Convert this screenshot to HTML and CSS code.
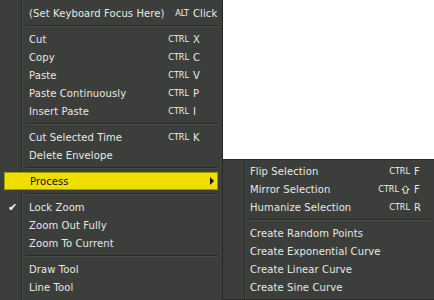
FILE: index.html
```html
<!DOCTYPE html>
<html lang="en">
<head>
    <meta charset="UTF-8">
    <title>Automation context menu</title>
    <link rel="stylesheet" href="styles.css">
</head>
<body>
    <div class="screen">
        <div class="menu main-menu">
            <div class="item"><span class="icon"></span><span class="label">(Set Keyboard Focus Here)</span><span class="mod">ALT</span><span class="key">Click</span></div>
            <div class="sep"></div>
            <div class="item"><span class="icon"></span><span class="label">Cut</span><span class="mod">CTRL</span><span class="key">X</span></div>
            <div class="item"><span class="icon"></span><span class="label">Copy</span><span class="mod">CTRL</span><span class="key">C</span></div>
            <div class="item"><span class="icon"></span><span class="label">Paste</span><span class="mod">CTRL</span><span class="key">V</span></div>
            <div class="item"><span class="icon"></span><span class="label">Paste Continuously</span><span class="mod">CTRL</span><span class="key">P</span></div>
            <div class="item"><span class="icon"></span><span class="label">Insert Paste</span><span class="mod">CTRL</span><span class="key">I</span></div>
            <div class="sep"></div>
            <div class="item"><span class="icon"></span><span class="label">Cut Selected Time</span><span class="mod">CTRL</span><span class="key">K</span></div>
            <div class="item"><span class="icon"></span><span class="label">Delete Envelope</span></div>
            <div class="sep"></div>
            <div class="item active"><span class="icon"></span><span class="label">Process</span><span class="mod"></span><span class="key"><span class="arrow"></span></span></div>
            <div class="sep"></div>
            <div class="item"><span class="icon check">&#10004;</span><span class="label">Lock Zoom</span></div>
            <div class="item"><span class="icon"></span><span class="label">Zoom Out Fully</span></div>
            <div class="item"><span class="icon"></span><span class="label">Zoom To Current</span></div>
            <div class="sep"></div>
            <div class="item"><span class="icon"></span><span class="label">Draw Tool</span></div>
            <div class="item"><span class="icon"></span><span class="label">Line Tool</span></div>
        </div>

        <!-- submenu opened from "Process" -->
        <div class="menu sub-menu">
            <div class="item"><span class="icon"></span><span class="label">Flip Selection</span><span class="mod">CTRL</span><span class="key">F</span></div>
            <div class="item"><span class="icon"></span><span class="label">Mirror Selection</span><span class="mod">CTRL<svg class="shift" width="9" height="9" viewBox="0 0 9 9"><path d="M4.5 0.8 L8.2 4.6 L6.2 4.6 L6.2 8.2 L2.8 8.2 L2.8 4.6 L0.8 4.6 Z" fill="none" stroke="#e8e8e6" stroke-width="1"/></svg></span><span class="key">F</span></div>
            <div class="item"><span class="icon"></span><span class="label">Humanize Selection</span><span class="mod">CTRL</span><span class="key">R</span></div>
            <div class="sep"></div>
            <div class="item"><span class="icon"></span><span class="label">Create Random Points</span></div>
            <div class="item"><span class="icon"></span><span class="label">Create Exponential Curve</span></div>
            <div class="item"><span class="icon"></span><span class="label">Create Linear Curve</span></div>
            <div class="item"><span class="icon"></span><span class="label">Create Sine Curve</span></div>
        </div>
    </div>
</body>
</html>
```

FILE: styles.css
```css
body {
    margin: 0;
    background: #ffffff;
    font-family: "DejaVu Sans", "Liberation Sans", sans-serif;
    font-size: 10px;
    color: #e8e8e6;
}
.screen {
    position: relative;
    width: 434px;
    height: 300px;
    overflow: hidden;
    background: #ffffff;
}
.menu {
    box-sizing: border-box;
    background:
        linear-gradient(to right,
            transparent 21px, #2c2d2b 21px, #2c2d2b 22px,
            #484a47 22px, #484a47 23px, transparent 23px),
        #3c3e3b;
}
.main-menu {
    width: 223px;
    height: 300px;
    padding-top: 4px;
    border-right: 1px solid #272826;
}
.sub-menu {
    position: absolute;
    left: 222px;
    top: 159px;
    width: 214px;
    height: 141px;
    padding-top: 2px;
    border: 1px solid #272826;
}
.item {
    display: grid;
    grid-template-columns: 25px 1fr auto 22px;
    align-items: center;
    height: 18px;
    margin: 0 4px;
    padding-right: 3px;
    box-sizing: border-box;
    white-space: nowrap;
    letter-spacing: 0.1px;
}
.sub-menu .item {
    grid-template-columns: 23px 1fr auto 14px;
}
.item .mod {
    display: flex;
    align-items: center;
    justify-content: flex-end;
    font-family: "DejaVu Sans Condensed", "DejaVu Sans", sans-serif;
    font-size: 9px;
    letter-spacing: 0;
    color: #f2f2f0;
    margin-right: 4px;
}
.shift {
    margin-left: 2px;
}
.item .icon {
    padding-left: 4px;
}
.check {
    font-size: 11px;
    color: #f0f0ee;
}
.item.active {
    background: #efdf00;
    border: 1px solid #a59700;
    color: #111111;
}
.arrow {
    display: block;
    margin-left: auto;
    width: 0;
    height: 0;
    border-top: 4px solid transparent;
    border-bottom: 4px solid transparent;
    border-left: 4px solid #111111;
}
.sep {
    height: 8px;
    margin-left: 26px;
    margin-right: 4px;
    box-sizing: border-box;
    padding-top: 3px;
}
.sep::before {
    content: "";
    display: block;
    height: 1px;
    background: #2a2b29;
    border-bottom: 1px solid #4a4c49;
}
```
